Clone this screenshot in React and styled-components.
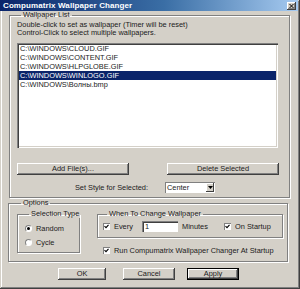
import React from "react";
import styled, { createGlobalStyle } from "styled-components";

const Global = createGlobalStyle`
  html, body { margin: 0; padding: 0; background: #d4d0c8; overflow: hidden; }
  * { box-sizing: border-box; }
`;

const Window = styled.div`
  width: 300px;
  height: 289px;
  background: #d4d0c8;
  font-family: "Liberation Sans", Arial, sans-serif;
  font-size: 7.4px;
  color: #1a1a1a;
  box-shadow: inset -1px -1px #404040, inset 1px 1px #d4d0c8, inset -2px -2px #808080, inset 2px 2px #fff;
  display: flex;
  flex-direction: column;
  padding: 0 2px 2px 0;
`;

const TitleBar = styled.div`
  height: 11px;
  display: flex;
  align-items: center;
  justify-content: space-between;
  padding: 0 2px 0 3px;
  background: linear-gradient(to right, #0a246a 0%, #3a6ea5 55%, #a6caf0 100%);
`;

const Title = styled.span`
  color: #fff;
  font-weight: bold;
  font-size: 8px;
  line-height: 11px;
  letter-spacing: 0.1px;
`;

const CloseBtn = styled.div`
  width: 9px;
  height: 8px;
  background: #d4d0c8;
  box-shadow: inset -1px -1px #404040, inset 1px 1px #fff, inset -2px -2px #808080;
  display: flex;
  align-items: center;
  justify-content: center;
`;

const Group = styled.fieldset`
  margin: ${(p) => p.$mt || 0}px 0 0 ${(p) => p.$ml || 0}px;
  width: ${(p) => p.$w}px;
  height: ${(p) => p.$h}px;
  padding: ${(p) => p.$pad || "0"};
  border: 1px solid #808080;
  box-shadow: inset 1px 1px 0 #fff, 1px 1px 0 #fff;
  min-inline-size: 0;
  flex-shrink: 0;
`;

const Legend = styled.legend`
  margin-left: 4px;
  padding: 0 2px;
  line-height: 8px;
  white-space: nowrap;
`;

const Line = styled.div`
  line-height: 8px;
  white-space: nowrap;
`;

const ListBox = styled.div`
  margin-top: 6px;
  width: 261px;
  height: 105px;
  background: #fff;
  box-shadow: inset 1px 1px #808080, inset 2px 2px #404040, inset -1px -1px #fff, inset -2px -2px #d4d0c8;
  padding: 1px 2px;
`;

const ListItem = styled.div`
  height: 9px;
  line-height: 9px;
  padding-left: 1px;
  white-space: nowrap;
  background: ${(p) => (p.$sel ? "#0a246a" : "transparent")};
  color: ${(p) => (p.$sel ? "#fff" : "#1a1a1a")};
`;

const ButtonRow = styled.div`
  display: flex;
  gap: ${(p) => p.$gap}px;
  margin-top: ${(p) => p.$mt}px;
  margin-left: ${(p) => p.$ml || 0}px;
`;

const Button = styled.div`
  width: ${(p) => p.$w}px;
  height: 12px;
  margin-left: ${(p) => p.$ml || 0}px;
  display: flex;
  align-items: center;
  justify-content: center;
  background: #d4d0c8;
  box-shadow: ${(p) =>
    p.$default
      ? "inset 0 0 0 1px #000, inset -2px -2px #404040, inset 2px 2px #fff, inset -3px -3px #808080"
      : "inset -1px -1px #404040, inset 1px 1px #fff, inset -2px -2px #808080"};
  line-height: 8px;
`;

const StyleRow = styled.div`
  display: flex;
  align-items: center;
  margin-top: 7px;
`;

const StyleLabel = styled.span`
  width: 131px;
  text-align: right;
  margin-right: 17px;
`;

const Combo = styled.div`
  width: 50px;
  height: 11px;
  background: #fff;
  box-shadow: inset 1px 1px #808080, inset -1px -1px #fff;
  display: flex;
  align-items: center;
  justify-content: space-between;
  padding: 1px 1px 1px 2px;
`;

const ComboBtn = styled.div`
  width: 8px;
  height: 9px;
  background: #d4d0c8;
  box-shadow: inset -1px -1px #404040, inset 1px 1px #fff;
  display: flex;
  align-items: center;
  justify-content: center;
`;

const OptionsBody = styled.div`
  display: flex;
  gap: 17px;
  padding-top: 3px;
`;

const Column = styled.div`
  display: flex;
  flex-direction: column;
`;

const Row = styled.label`
  display: flex;
  align-items: center;
  height: 8px;
  gap: ${(p) => p.$gap || 4}px;
  margin-top: ${(p) => p.$mt || 0}px;
  margin-left: ${(p) => p.$ml || 0}px;
  white-space: nowrap;
`;

const Fixed = styled.span`
  width: ${(p) => p.$w}px;
`;

const Radio = styled.span`
  width: 7px;
  height: 7px;
  border-radius: 50%;
  background: #fff;
  border: 1px solid #808080;
  border-right-color: #fff;
  border-bottom-color: #fff;
  display: flex;
  align-items: center;
  justify-content: center;
  &::after {
    content: "";
    width: 3px;
    height: 3px;
    border-radius: 50%;
    background: ${(p) => (p.$on ? "#000" : "transparent")};
  }
`;

const Check = styled.span`
  width: 7px;
  height: 7px;
  background: #fff;
  box-shadow: inset 1px 1px #808080;
  display: flex;
  align-items: center;
  justify-content: center;
`;

const TextInput = styled.div`
  width: 36px;
  height: 11px;
  background: #fff;
  box-shadow: inset 1px 1px #808080, inset 2px 2px #404040, inset -1px -1px #fff;
  padding-left: 3px;
  line-height: 11px;
`;

const Tick = () => (
  <svg width="5" height="5" viewBox="0 0 5 5">
    <path d="M0.5 2.2 L2 3.7 L4.5 0.8" stroke="#000" strokeWidth="1.1" fill="none" />
  </svg>
);

const files = [
  "C:\\WINDOWS\\CLOUD.GIF",
  "C:\\WINDOWS\\CONTENT.GIF",
  "C:\\WINDOWS\\HLPGLOBE.GIF",
  "C:\\WINDOWS\\WINLOGO.GIF",
  "C:\\WINDOWS\\Волны.bmp",
];

export default function App() {
  return (
    <>
      <Global />
      <Window>
        <TitleBar>
          <Title>Compumatrix Wallpaper Changer</Title>
          <CloseBtn>
            <svg width="5" height="4" viewBox="0 0 5 4">
              <path d="M0.5 0 L4.5 4 M4.5 0 L0.5 4" stroke="#000" strokeWidth="1" />
            </svg>
          </CloseBtn>
        </TitleBar>

        <Group $ml={9} $w={281} $h={187} $pad="2px 0 0 7px">
          <Legend>Wallpaper List</Legend>
          <Line>Double-click to set as wallpaper (Timer will be reset)</Line>
          <Line>Control-Click to select multiple wallpapers.</Line>
          <ListBox>
            {files.map((f, i) => (
              <ListItem key={f} $sel={i === 3}>
                {f}
              </ListItem>
            ))}
          </ListBox>
          <ButtonRow $gap={38} $mt={15}>
            <Button $w={112}>Add File(s)...</Button>
            <Button $w={112}>Delete Selected</Button>
          </ButtonRow>
          <StyleRow>
            <StyleLabel>Set Style for Selected:</StyleLabel>
            <Combo>
              <span>Center</span>
              <ComboBtn>
                <svg width="5" height="3" viewBox="0 0 5 3">
                  <path d="M0 0 H5 L2.5 3 Z" fill="#000" />
                </svg>
              </ComboBtn>
            </Combo>
          </StyleRow>
        </Group>

        <Group $ml={8} $mt={1} $w={280} $h={63} $pad="0 0 0 8px">
          <Legend>Options</Legend>
          <OptionsBody>
            <Group $w={63} $h={43} $pad="6px 0 0 7px">
              <Legend>Selection Type</Legend>
              <Row>
                <Radio $on />
                Random
              </Row>
              <Row $mt={6}>
                <Radio />
                Cycle
              </Row>
            </Group>
            <Column>
              <Group $w={186} $h={28} $pad="4px 0 0 5px">
                <Legend>When To Change Wallpaper</Legend>
                <Row>
                  <Check>
                    <Tick />
                  </Check>
                  <Fixed $w={24}>Every</Fixed>
                  <TextInput>1</TextInput>
                  <Fixed $w={38}>Minutes</Fixed>
                  <Check>
                    <Tick />
                  </Check>
                  On Startup
                </Row>
              </Group>
              <Row $mt={8} $ml={6}>
                <Check>
                  <Tick />
                </Check>
                Run Compumatrix Wallpaper Changer At Startup
              </Row>
            </Column>
          </OptionsBody>
        </Group>

        <ButtonRow $gap={12} $mt={6} $ml={58}>
          <Button $w={48}>OK</Button>
          <Button $w={52} $ml={5}>Cancel</Button>
          <Button $w={52} $default>
            Apply
          </Button>
        </ButtonRow>
      </Window>
    </>
  );
}
